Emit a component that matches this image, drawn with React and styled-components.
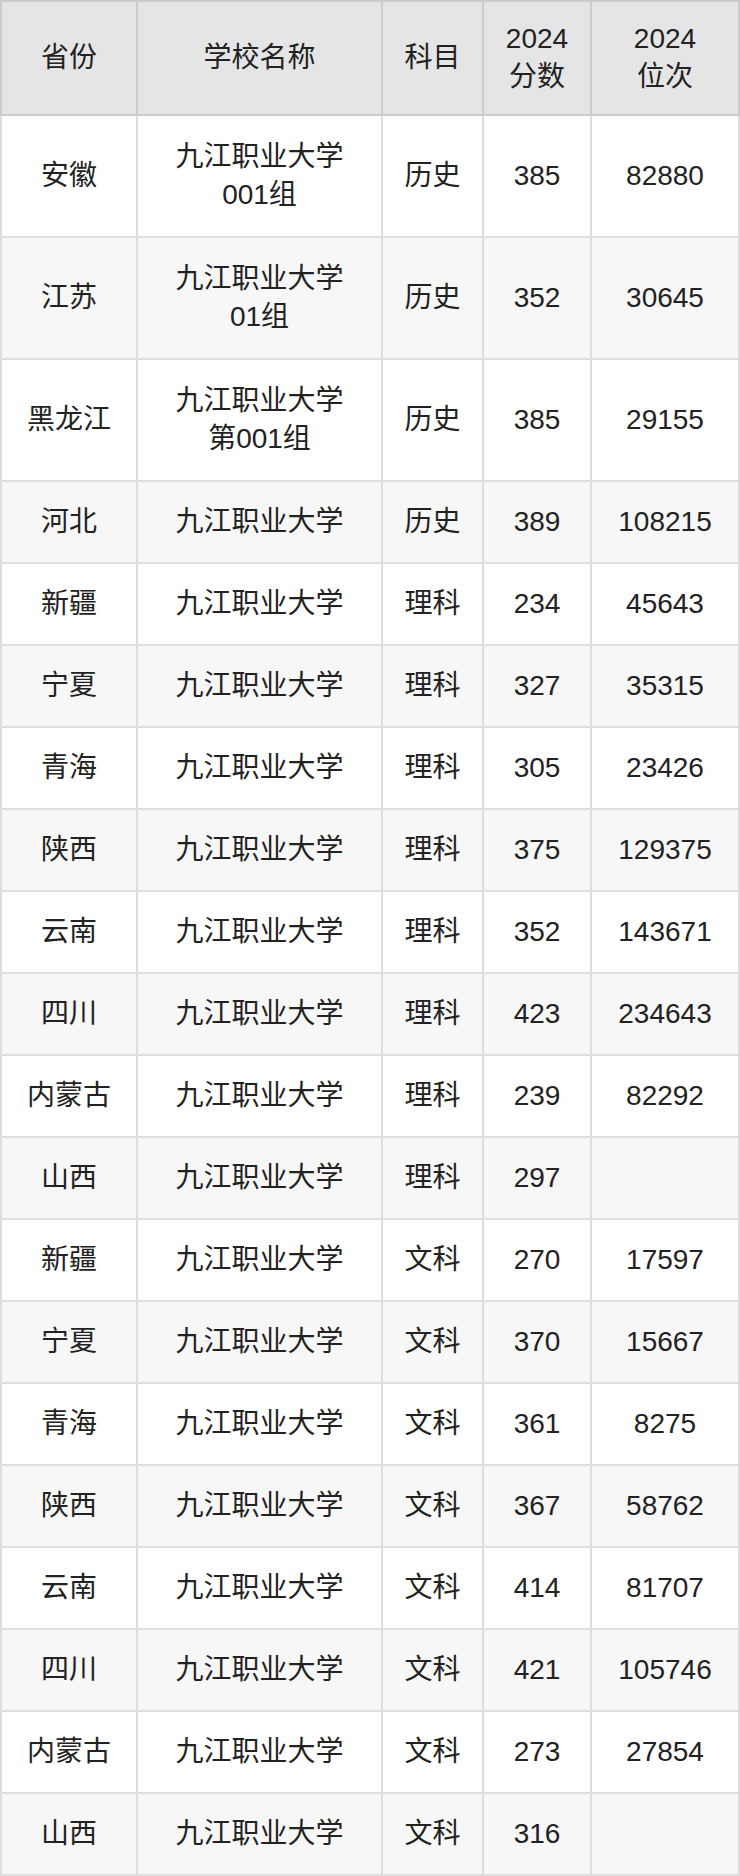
import React from "react";
import styled, { createGlobalStyle } from "styled-components";

const Global = createGlobalStyle`
  html, body { margin: 0; padding: 0; background: #fff; }
  body { font-family: "Liberation Sans", "Noto Sans CJK SC", sans-serif; }
`;

const Table = styled.table`
  width: 740px;
  border-collapse: collapse;
  table-layout: fixed;
  border: 2px solid #d4d4d4;
  color: #222;
  font-size: 28px;
  line-height: 38px;
  text-align: center;
`;

const Col = styled.col`
  width: ${(p) => p.$w}px;
`;

const HeadCell = styled.th`
  font-weight: normal;
  background: #e5e5e5;
  border: 2px solid #cccccc;
  height: 112px;
  padding: 0 4px;
  vertical-align: middle;
`;

const Row = styled.tr`
  background: ${(p) => (p.$alt ? "#f7f7f7" : "#ffffff")};
`;

const Cell = styled.td`
  border: 2px solid #dddddd;
  height: ${(p) => (p.$tall ? 120 : 80)}px;
  padding: 0 4px;
  vertical-align: middle;
`;

const colWidths = [136, 245, 101, 108, 148];

const rows = [
  ["安徽", ["九江职业大学", "001组"], "历史", "385", "82880"],
  ["江苏", ["九江职业大学", "01组"], "历史", "352", "30645"],
  ["黑龙江", ["九江职业大学", "第001组"], "历史", "385", "29155"],
  ["河北", "九江职业大学", "历史", "389", "108215"],
  ["新疆", "九江职业大学", "理科", "234", "45643"],
  ["宁夏", "九江职业大学", "理科", "327", "35315"],
  ["青海", "九江职业大学", "理科", "305", "23426"],
  ["陕西", "九江职业大学", "理科", "375", "129375"],
  ["云南", "九江职业大学", "理科", "352", "143671"],
  ["四川", "九江职业大学", "理科", "423", "234643"],
  ["内蒙古", "九江职业大学", "理科", "239", "82292"],
  ["山西", "九江职业大学", "理科", "297", ""],
  ["新疆", "九江职业大学", "文科", "270", "17597"],
  ["宁夏", "九江职业大学", "文科", "370", "15667"],
  ["青海", "九江职业大学", "文科", "361", "8275"],
  ["陕西", "九江职业大学", "文科", "367", "58762"],
  ["云南", "九江职业大学", "文科", "414", "81707"],
  ["四川", "九江职业大学", "文科", "421", "105746"],
  ["内蒙古", "九江职业大学", "文科", "273", "27854"],
  ["山西", "九江职业大学", "文科", "316", ""],
];

const Lines = ({ v }) =>
  Array.isArray(v) ? (
    <>
      {v[0]}
      <br />
      {v[1]}
    </>
  ) : (
    v
  );

export default function App() {
  return (
    <>
      <Global />
      <Table>
        <colgroup>
          {colWidths.map((w, i) => (
            <Col key={i} $w={w} />
          ))}
        </colgroup>
        <thead>
          <tr>
            <HeadCell>省份</HeadCell>
            <HeadCell>学校名称</HeadCell>
            <HeadCell>科目</HeadCell>
            <HeadCell>
              2024
              <br />
              分数
            </HeadCell>
            <HeadCell>
              2024
              <br />
              位次
            </HeadCell>
          </tr>
        </thead>
        <tbody>
          {rows.map((r, i) => {
            const tall = Array.isArray(r[1]);
            return (
              <Row key={i} $alt={i % 2 === 1}>
                {r.map((c, j) => (
                  <Cell key={j} $tall={tall}>
                    <Lines v={c} />
                  </Cell>
                ))}
              </Row>
            );
          })}
        </tbody>
      </Table>
    </>
  );
}
